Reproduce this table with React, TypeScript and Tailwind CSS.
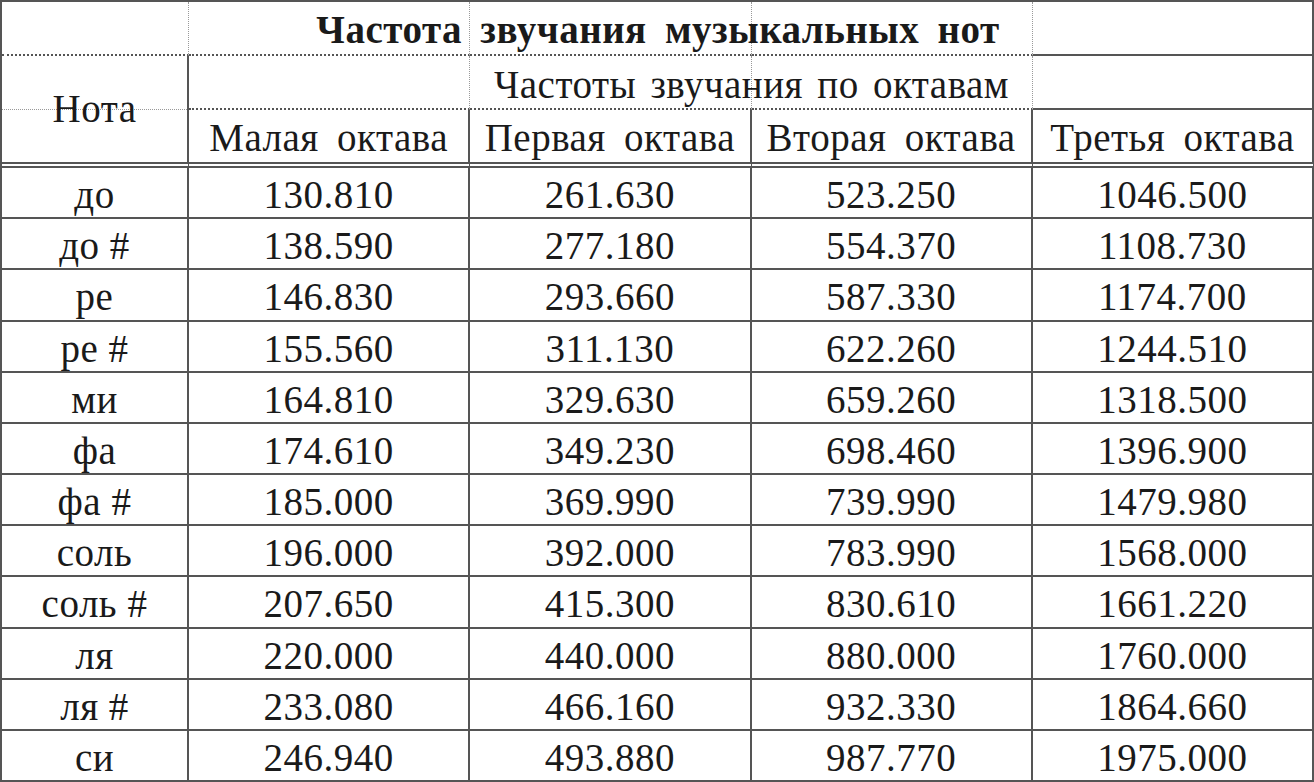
import React from "react";

const rows: [string, string, string, string, string][] = [
  ["до", "130.810", "261.630", "523.250", "1046.500"],
  ["до #", "138.590", "277.180", "554.370", "1108.730"],
  ["ре", "146.830", "293.660", "587.330", "1174.700"],
  ["ре #", "155.560", "311.130", "622.260", "1244.510"],
  ["ми", "164.810", "329.630", "659.260", "1318.500"],
  ["фа", "174.610", "349.230", "698.460", "1396.900"],
  ["фа #", "185.000", "369.990", "739.990", "1479.980"],
  ["соль", "196.000", "392.000", "783.990", "1568.000"],
  ["соль #", "207.650", "415.300", "830.610", "1661.220"],
  ["ля", "220.000", "440.000", "880.000", "1760.000"],
  ["ля #", "233.080", "466.160", "932.330", "1864.660"],
  ["си", "246.940", "493.880", "987.770", "1975.000"],
];

const octaves = ["Малая октава", "Первая октава", "Вторая октава", "Третья октава"];

export default function App() {
  return (
    <div
      className="w-[1314px] h-[782px] bg-white text-[#1a1a1a] overflow-hidden"
      style={{ fontFamily: '"Liberation Serif", "Times New Roman", serif' }}
    >
      <div className="grid h-full grid-cols-[187px_repeat(4,1fr)] grid-rows-[54px_54px_58px_repeat(12,1fr)] border-t-2 border-l-2 border-[#555] text-[39px] tracking-[0.5px]">
        {/* Title row: dotted grid lines with centered bold caption */}
        {[1, 2, 3, 4].map((c) => (
          <div key={c} className="row-start-1 border-b-2 border-b-[#555] border-r border-dotted border-r-[#999]" style={{ gridColumnStart: c }} />
        ))}
        <div className="row-start-1 col-start-5 border-b-2 border-r-2 border-[#555]" />
        <div className="row-start-1 col-span-5 col-start-1 flex items-center justify-center font-bold [word-spacing:8px] pt-0.5">
          Частота звучания музыкальных нот
        </div>

        {/* Нота cell spanning header rows 2-3 */}
        <div className="row-start-2 col-start-1 border-b border-dotted border-b-[#999]" />
        <div className="row-start-2 row-span-2 col-start-1 flex items-center justify-center border-r-2 border-r-[#555] border-b-[6px] border-double border-b-[#555]">
          Нота
        </div>

        {/* Subheader row */}
        {[2, 3, 4].map((c) => (
          <div key={c} className="row-start-2 border-b-2 border-b-[#555] border-r border-dotted border-r-[#999]" style={{ gridColumnStart: c }} />
        ))}
        <div className="row-start-2 col-start-5 border-b-2 border-r-2 border-[#555]" />
        <div className="row-start-2 col-start-2 col-span-4 flex items-center justify-center [word-spacing:4px] pt-1">
          Частоты звучания по октавам
        </div>

        {/* Octave names */}
        {octaves.map((o) => (
          <div key={o} className="row-start-3 flex items-center justify-center border-r-2 border-r-[#555] border-b-[6px] border-double border-b-[#555] [word-spacing:8px] pt-1">
            {o}
          </div>
        ))}

        {/* Data */}
        {rows.map((r) =>
          r.map((v, i) => (
            <div key={r[0] + i} className="flex items-center justify-center border-r-2 border-b-2 border-[#555] leading-none pt-1">
              {v}
            </div>
          ))
        )}
      </div>
    </div>
  );
}
